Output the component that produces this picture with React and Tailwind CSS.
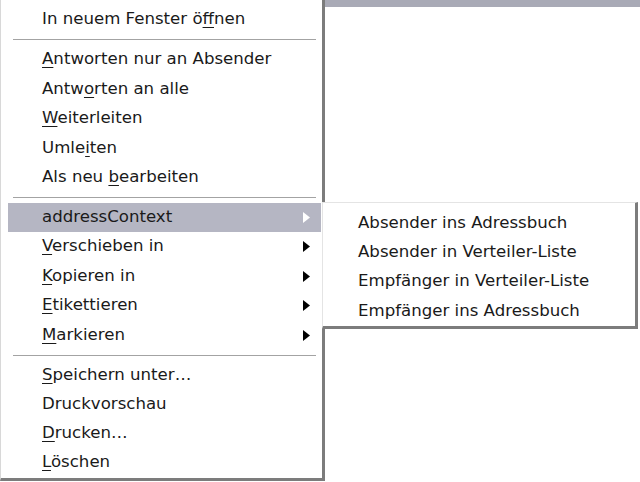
import React from "react";

// one menu row: label with mnemonic letter underlined, optional submenu arrow
const Item = ({ label, mnemonic, arrow, active, h = "h-[29.5px]" }) => {
  let content = label;
  if (mnemonic != null) {
    content = (
      <>
        {label.slice(0, mnemonic)}
        <span className="underline underline-offset-[3px] decoration-1">
          {label[mnemonic]}
        </span>
        {label.slice(mnemonic + 1)}
      </>
    );
  }
  return (
    <div
      className={`${h} flex items-center pl-[34px] pr-[11px] ${
        active ? "bg-[#b5b6c3]" : ""
      }`}
    >
      <span className="flex-1 whitespace-nowrap">{content}</span>
      {arrow && (
        <svg width="7" height="11" viewBox="0 0 7 11">
          <path d="M0 0 L7 5.5 L0 11 Z" fill={active ? "#ffffff" : "#000000"} />
        </svg>
      )}
    </div>
  );
};

const Separator = ({ h = "h-[10px]" }) => (
  <div className={`${h} flex items-center px-[5px]`}>
    <div className="h-px w-full bg-[#a3a3a3]" />
  </div>
);

export default function App() {
  return (
    <div className="relative w-[640px] h-[482px] bg-white overflow-hidden font-['DejaVu_Sans',Verdana,sans-serif] text-[16.6px] text-[#1a1a1a]">
      {/* strip of the list header behind the menu */}
      <div className="absolute left-[325px] top-0 right-0 h-[7px] bg-[#a9aab6]" />

      {/* main context menu */}
      <div className="absolute left-0 top-[-6px] w-[325px] pt-[11px] pl-[7px] pr-px pb-px bg-white border-l border-[#d8d8d8] border-r-[3px] border-r-[#7c7c7c] border-b-[3px] border-b-[#7c7c7c]">
        <Item label="In neuem Fenster öffnen" mnemonic={18} />
        <Separator h="h-[10.5px]" />
        <Item label="Antworten nur an Absender" mnemonic={0} />
        <Item label="Antworten an alle" mnemonic={4} />
        <Item label="Weiterleiten" mnemonic={0} />
        <Item label="Umleiten" mnemonic={4} />
        <Item label="Als neu bearbeiten" mnemonic={8} />
        <Separator />
        <Item label="addressContext" arrow active />
        <Item label="Verschieben in" mnemonic={0} arrow />
        <Item label="Kopieren in" mnemonic={0} arrow />
        <Item label="Etikettieren" mnemonic={0} arrow />
        <Item label="Markieren" mnemonic={0} arrow />
        <Separator h="h-[10.5px]" />
        <Item label="Speichern unter…" mnemonic={0} h="h-[29px]" />
        <Item label="Druckvorschau" h="h-[29px]" />
        <Item label="Drucken…" mnemonic={0} h="h-[29px]" />
        <Item label="Löschen" mnemonic={0} h="h-[29px]" />
      </div>

      {/* addressContext submenu */}
      <div className="absolute left-[322px] top-[202px] w-[316px] pt-[5.5px] bg-white border-l border-t border-[#e4e4e4] border-r-[3px] border-r-[#7c7c7c] border-b-[3px] border-b-[#7c7c7c]">
        <div className="h-[29.3px] flex items-center pl-[35px] whitespace-nowrap">Absender ins Adressbuch</div>
        <div className="h-[29.3px] flex items-center pl-[35px] whitespace-nowrap">Absender in Verteiler-Liste</div>
        <div className="h-[29.3px] flex items-center pl-[35px] whitespace-nowrap">Empfänger in Verteiler-Liste</div>
        <div className="h-[29.3px] flex items-center pl-[35px] whitespace-nowrap">Empfänger ins Adressbuch</div>
      </div>
    </div>
  );
}
